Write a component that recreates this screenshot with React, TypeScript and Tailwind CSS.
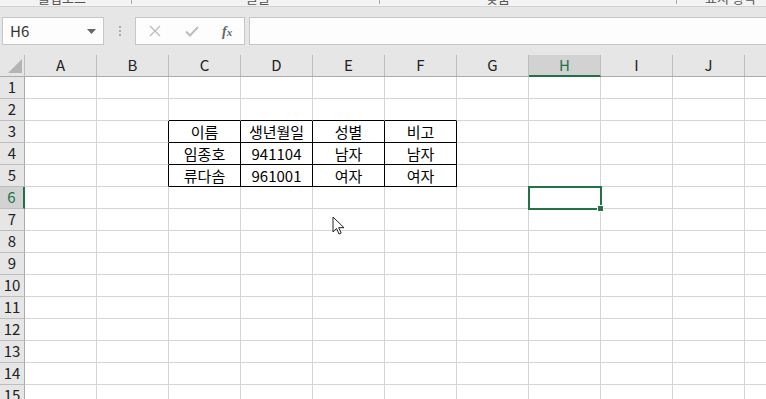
import React from 'react'

const cols = ['A', 'B', 'C', 'D', 'E', 'F', 'G', 'H', 'I', 'J', 'K']
const rows = Array.from({ length: 15 }, (_, i) => i + 1)

const data: Record<string, string> = {
  '3-2': '이름',
  '3-3': '생년월일',
  '3-4': '성별',
  '3-5': '비고',
  '4-2': '임종호',
  '4-3': '941104',
  '4-4': '남자',
  '4-5': '남자',
  '5-2': '류다솜',
  '5-3': '961001',
  '5-4': '여자',
  '5-5': '여자',
}

const font = { fontFamily: '"Noto Sans CJK KR", "Liberation Sans", sans-serif' }

function Cell({ r, c }: { r: number; c: number }) {
  const rightBlack = r >= 3 && r <= 5 && c >= 1 && c <= 5
  const bottomBlack = r >= 2 && r <= 5 && c >= 2 && c <= 5
  const text = data[`${r}-${c}`]
  return (
    <div
      className={`w-[72px] h-[22px] shrink-0 border-r border-b flex items-center justify-center text-[15px] text-black leading-none ${
        rightBlack ? 'border-r-black' : 'border-r-[#d4d4d4]'
      } ${bottomBlack ? 'border-b-black' : 'border-b-[#d4d4d4]'}`}
    >
      {text}
    </div>
  )
}

export default function App() {
  return (
    <div className="relative w-[766px] h-[399px] overflow-hidden bg-white select-none" style={font}>
      {/* ribbon bottom edge */}
      <div className="h-[7px] bg-[#f3f3f3] border-b border-[#d2d2d2] overflow-hidden relative text-[13px] text-[#555]">
        <span className="absolute left-[38px] top-[-12px]">클립보드</span>
        <span className="absolute left-[128px] top-[-10px] w-[4px] h-[14px] border-r border-[#aaa]" />
        <span className="absolute left-[246px] top-[-12px]">글꼴</span>
        <span className="absolute left-[376px] top-[-10px] w-[4px] h-[14px] border-r border-[#aaa]" />
        <span className="absolute left-[486px] top-[-12px]">맞춤</span>
        <span className="absolute left-[673px] top-[-10px] w-[4px] h-[14px] border-r border-[#aaa]" />
        <span className="absolute left-[705px] top-[-12px]">표시 형식</span>
      </div>

      {/* formula bar */}
      <div className="bg-[#e6e6e6] pt-[10px] pb-[10px] flex items-center h-[48px]">
        <div className="ml-[2px] w-[102px] h-[28px] bg-[#fdfdfd] border border-[#c6c6c6] flex items-center justify-between px-[7px]">
          <span className="text-[15px] text-[#333]">H6</span>
          <svg width="9" height="5" viewBox="0 0 9 5">
            <path d="M0 0h9L4.5 5z" fill="#666" />
          </svg>
        </div>
        <div className="w-[31px] flex flex-col items-center gap-[2px]">
          <span className="w-[2px] h-[2px] bg-[#aaa]" />
          <span className="w-[2px] h-[2px] bg-[#aaa]" />
          <span className="w-[2px] h-[2px] bg-[#aaa]" />
        </div>
        <div className="w-[110px] h-[28px] bg-[#fdfdfd] border border-[#c6c6c6] flex items-center">
          <svg className="ml-[13px]" width="12" height="12" viewBox="0 0 12 12">
            <path d="M1 1l10 10M11 1L1 11" stroke="#bdbdbd" strokeWidth="1.4" />
          </svg>
          <svg className="ml-[24px]" width="14" height="11" viewBox="0 0 14 11">
            <path d="M1 5.5l4 4L13 1" stroke="#bdbdbd" strokeWidth="2" fill="none" />
          </svg>
          <span
            className="ml-[23px] text-[14px] italic font-bold text-[#666]"
            style={{ fontFamily: '"Liberation Serif", serif' }}
          >
            f<span className="text-[11px]">x</span>
          </span>
        </div>
        <div className="ml-[4px] flex-1 h-[28px] bg-[#fdfdfd] border-y border-l border-[#c6c6c6]" />
      </div>

      {/* column headers */}
      <div className="flex h-[22px] bg-[#e6e6e6] border-b border-[#ababab]">
        <div className="w-[25px] shrink-0 border-r border-[#bdbdbd] relative">
          <svg className="absolute left-[8px] top-[4px]" width="14" height="14" viewBox="0 0 14 14">
            <path d="M14 0V14H0z" fill="#b4b4b4" />
          </svg>
        </div>
        {cols.map((c) =>
          c === 'H' ? (
            <div
              key={c}
              className="w-[72px] shrink-0 bg-[#d2d2d2] border-r border-[#bdbdbd] border-b-2 border-b-[#217346] -mb-px flex items-center justify-center text-[15px] text-[#217346]"
            >
              {c}
            </div>
          ) : (
            <div
              key={c}
              className="w-[72px] shrink-0 border-r border-[#bdbdbd] flex items-center justify-center text-[15px] text-[#222]"
            >
              {c}
            </div>
          )
        )}
      </div>

      {/* grid */}
      {rows.map((r) => (
        <div key={r} className="flex">
          <div
            className={`w-[25px] h-[22px] shrink-0 border-b border-[#bdbdbd] flex items-center justify-center text-[15px] ${
              r === 6
                ? 'bg-[#d2d2d2] border-r-2 border-r-[#217346] text-[#217346]'
                : 'bg-[#e6e6e6] border-r border-r-[#ababab] text-[#222]'
            }`}
          >
            {r}
          </div>
          {cols.map((_, c) => (
            <Cell key={c} r={r} c={c} />
          ))}
        </div>
      ))}

      {/* selection H6 */}
      <div className="absolute left-[528px] top-[186px] w-[74px] h-[24px] border-2 border-[#217346]" />
      <div className="absolute left-[597px] top-[205px] w-[7px] h-[7px] bg-[#217346] border border-white" />

      {/* mouse cursor */}
      <svg className="absolute left-[332px] top-[216px]" width="14" height="20" viewBox="0 0 14 20">
        <path
          d="M1 1v15l3.5-3.5 2.5 5.5 2.2-1-2.5-5.3H12z"
          fill="#fff"
          stroke="#222"
          strokeWidth="1"
          strokeLinejoin="round"
        />
      </svg>
    </div>
  )
}
